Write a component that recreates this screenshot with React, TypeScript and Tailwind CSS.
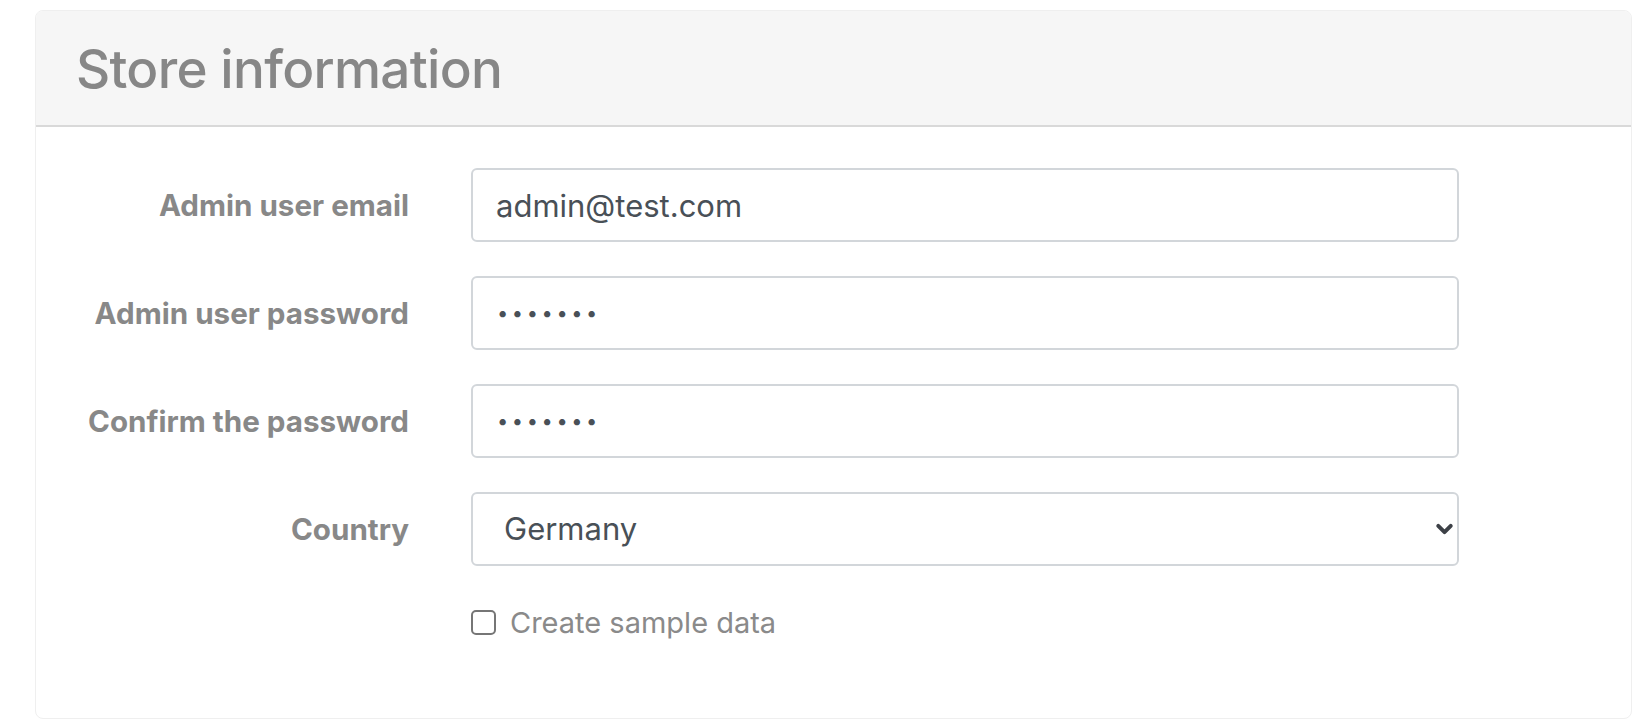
import { ChevronDown } from "lucide-react";

const font = { fontFamily: "Inter, 'Noto Sans', sans-serif" };

function Label({ children }: { children: string }) {
  return (
    <label className="flex items-center justify-end text-[29.6px] font-bold text-[#888888]">
      {children}
    </label>
  );
}

export default function App() {
  return (
    <div className="min-h-screen bg-white pl-[35px] pt-[10px]" style={font}>
      <div className="w-[1597px] rounded-[8px] border border-[#efefef] overflow-hidden">
        <div className="h-[116px] bg-[#f6f6f6] border-b-2 border-[#d9d9d9] flex items-center pl-[40px] pt-[4px]">
          <h1 className="text-[53px] font-medium text-[#878787] tracking-[-0.7px]">Store information</h1>
        </div>
        <div className="pt-[41px] pb-[73px]">
          <div className="grid grid-cols-[373px_988px] gap-x-[62px] gap-y-[34px] auto-rows-[74px]">
            <Label>Admin user email</Label>
            <input
              type="email"
              defaultValue="admin@test.com"
              className="h-[74px] rounded-[6px] border-2 border-[#d2d6da] px-[23px] text-[31px] text-[#495057] outline-none"
            />
            <Label>Admin user password</Label>
            <input
              type="password"
              defaultValue="1234567"
              className="h-[74px] rounded-[6px] border-2 border-[#d2d6da] px-[24px] text-[20px] tracking-[3.6px] text-[#495057] outline-none"
            />
            <Label>Confirm the password</Label>
            <input
              type="password"
              defaultValue="1234567"
              className="h-[74px] rounded-[6px] border-2 border-[#d2d6da] px-[24px] text-[20px] tracking-[3.6px] text-[#495057] outline-none"
            />
            <Label>Country</Label>
            <div className="relative">
              <select
                defaultValue="Germany"
                className="h-[74px] w-full appearance-none rounded-[6px] border-2 border-[#d2d6da] bg-white pl-[31px] text-[31px] text-[#495057] outline-none"
              >
                <option>Germany</option>
                <option>France</option>
                <option>United States</option>
              </select>
              <ChevronDown
                className="pointer-events-none absolute right-[2px] top-1/2 -translate-y-1/2 text-[#3d4147]"
                size={25}
                strokeWidth={3.8}
              />
            </div>
          </div>
          <div className="ml-[435px] mt-[35px] flex items-center gap-[14px]">
            <input
              type="checkbox"
              className="h-[25px] w-[25px] appearance-none rounded-[5px] border-2 border-[#767676] bg-white"
            />
            <span className="text-[29px] text-[#8a8a8a]">Create sample data</span>
          </div>
        </div>
      </div>
    </div>
  );
}
